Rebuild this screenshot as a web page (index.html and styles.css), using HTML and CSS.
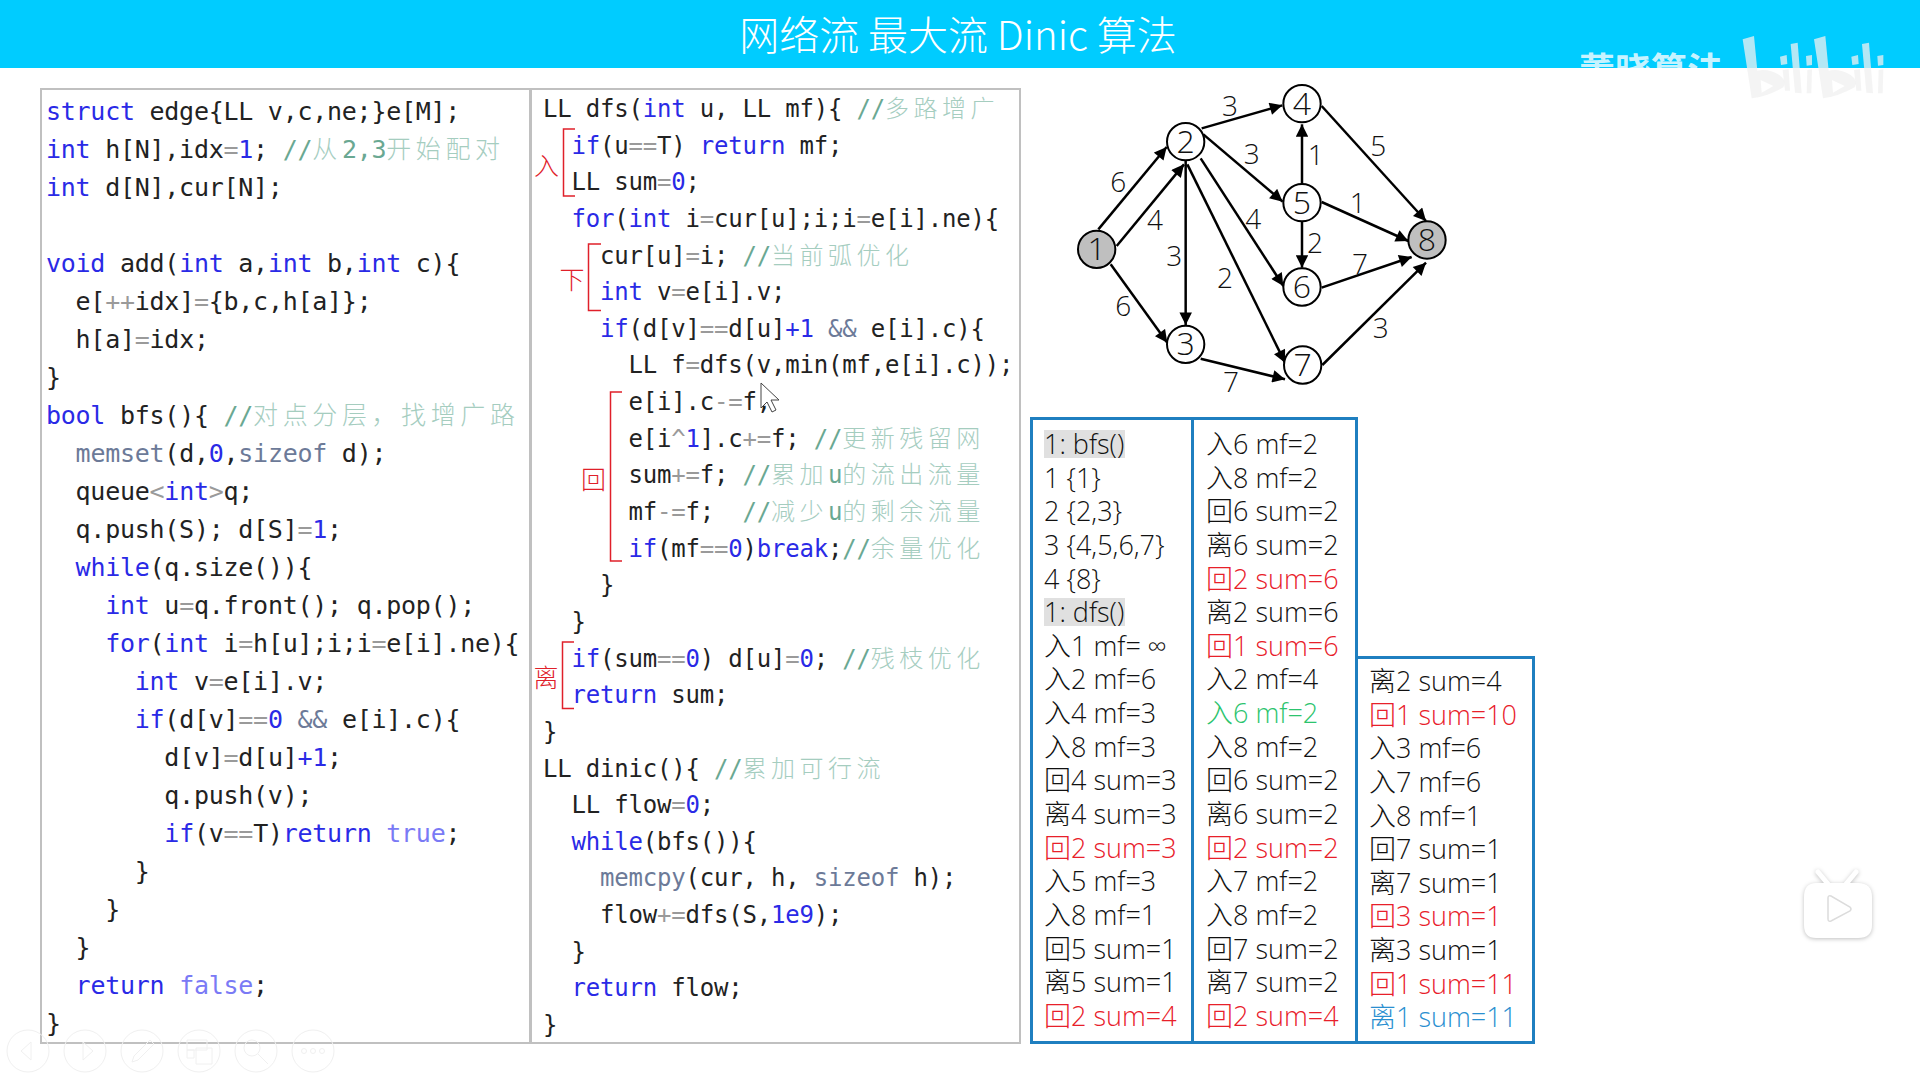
FILE: index.html
```html
<!DOCTYPE html>
<html lang="zh-CN">
<head>
<meta charset="utf-8">
<title>网络流 最大流 Dinic 算法</title>
<link rel="stylesheet" href="styles.css">
</head>
<body>
<header class="title">网络流 最大流 Dinic 算法</header>
<main class="stage">
  <section class="code code-left">
    <div class="ln"><b>struct</b> edge{LL v,c,ne;}e[M];</div>
    <div class="ln"><b>int</b> h[N],idx<s>=</s><b>1</b>; <u>//</u><em>从</em><u>2,3</u><em>开始配对</em></div>
    <div class="ln"><b>int</b> d[N],cur[N];</div>
    <div class="ln">&nbsp;</div>
    <div class="ln"><b>void</b> add(<b>int</b> a,<b>int</b> b,<b>int</b> c){</div>
    <div class="ln">  e[<s>++</s>idx]<s>=</s>{b,c,h[a]};</div>
    <div class="ln">  h[a]<s>=</s>idx;</div>
    <div class="ln">}</div>
    <div class="ln"><b>bool</b> bfs(){ <u>//</u><em>对点分层，找增广路</em></div>
    <div class="ln">  <i>memset</i>(d,<b>0</b>,<i>sizeof</i> d);</div>
    <div class="ln">  queue<s>&lt;</s><b>int</b><s>&gt;</s>q;</div>
    <div class="ln">  q.push(S); d[S]<s>=</s><b>1</b>;</div>
    <div class="ln">  <b>while</b>(q.size()){</div>
    <div class="ln">    <b>int</b> u<s>=</s>q.front(); q.pop();</div>
    <div class="ln">    <b>for</b>(<b>int</b> i<s>=</s>h[u];i;i<s>=</s>e[i].ne){</div>
    <div class="ln">      <b>int</b> v<s>=</s>e[i].v;</div>
    <div class="ln">      <b>if</b>(d[v]<s>==</s><b>0</b> <i>&amp;&amp;</i> e[i].c){</div>
    <div class="ln">        d[v]<s>=</s>d[u]<b>+1</b>;</div>
    <div class="ln">        q.push(v);</div>
    <div class="ln">        <b>if</b>(v<s>==</s>T)<b>return</b> <ins>true</ins>;</div>
    <div class="ln">      }</div>
    <div class="ln">    }</div>
    <div class="ln">  }</div>
    <div class="ln">  <b>return</b> <ins>false</ins>;</div>
    <div class="ln">}</div>
  </section>
  <section class="code code-mid">
    <div class="ln">LL dfs(<b>int</b> u, LL mf){ <u>//</u><em>多路增广</em></div>
    <div class="ln">  <b>if</b>(u<s>==</s>T) <b>return</b> mf;</div>
    <div class="ln">  LL sum<s>=</s><b>0</b>;</div>
    <div class="ln">  <b>for</b>(<b>int</b> i<s>=</s>cur[u];i;i<s>=</s>e[i].ne){</div>
    <div class="ln">    cur[u]<s>=</s>i; <u>//</u><em>当前弧优化</em></div>
    <div class="ln">    <b>int</b> v<s>=</s>e[i].v;</div>
    <div class="ln">    <b>if</b>(d[v]<s>==</s>d[u]<b>+1</b> <i>&amp;&amp;</i> e[i].c){</div>
    <div class="ln">      LL f<s>=</s>dfs(v,min(mf,e[i].c));</div>
    <div class="ln">      e[i].c<s>-=</s>f;</div>
    <div class="ln">      e[i<s>^</s><b>1</b>].c<s>+=</s>f; <u>//</u><em>更新残留网</em></div>
    <div class="ln">      sum<s>+=</s>f; <u>//</u><em>累加</em><u>u</u><em>的流出流量</em></div>
    <div class="ln">      mf<s>-=</s>f;  <u>//</u><em>减少</em><u>u</u><em>的剩余流量</em></div>
    <div class="ln">      <b>if</b>(mf<s>==</s><b>0</b>)<b>break</b>;<u>//</u><em>余量优化</em></div>
    <div class="ln">    }</div>
    <div class="ln">  }</div>
    <div class="ln">  <b>if</b>(sum<s>==</s><b>0</b>) d[u]<s>=</s><b>0</b>; <u>//</u><em>残枝优化</em></div>
    <div class="ln">  <b>return</b> sum;</div>
    <div class="ln">}</div>
    <div class="ln">LL dinic(){ <u>//</u><em>累加可行流</em></div>
    <div class="ln">  LL flow<s>=</s><b>0</b>;</div>
    <div class="ln">  <b>while</b>(bfs()){</div>
    <div class="ln">    <i>memcpy</i>(cur, h, <i>sizeof</i> h);</div>
    <div class="ln">    flow<s>+=</s>dfs(S,<b>1e9</b>);</div>
    <div class="ln">  }</div>
    <div class="ln">  <b>return</b> flow;</div>
    <div class="ln">}</div>
    <svg class="marks" viewBox="530 88 492 958">
      <g class="bracket">
        <path d="M575 129H563.5V196H575"/>
        <path d="M601 244H588.5V310.500H601"/>
        <path d="M622 392H610.500V561H622"/>
        <path d="M574 642H562.500V708.500H574"/>
      </g>
      <g class="mark">
        <text x="546.500" y="175">入</text>
        <text x="572" y="289">下</text>
        <text x="593.500" y="489">回</text>
        <text x="546" y="687">离</text>
      </g>
      <path class="cursor" d="M761 383V408L767 402L772 412L776 410L771 400L779 400Z"/>
    </svg>
  </section>
  <section class="side">
    <svg class="graph" viewBox="0 0 1320 1020">
      <defs>
        <marker id="tip" viewBox="0 0 10 10" refX="10" refY="5" markerWidth="5.500" markerHeight="5" orient="auto">
          <path d="M0 0L10 5L0 10Z"/>
        </marker>
      </defs>
      <g class="edges">
        <line x1="175" y1="475" x2="380" y2="228"/>
        <line x1="230" y1="525" x2="432" y2="280"/>
        <line x1="212" y1="580" x2="382" y2="815"/>
        <line x1="437" y1="270" x2="437" y2="762"/>
        <line x1="485" y1="172" x2="727" y2="103"/>
        <line x1="490" y1="190" x2="728" y2="392"/>
        <line x1="482" y1="262" x2="730" y2="645"/>
        <line x1="442" y1="280" x2="735" y2="875"/>
        <line x1="482" y1="863" x2="735" y2="925"/>
        <line x1="845" y1="105" x2="1158" y2="450"/>
        <line x1="786" y1="338" x2="786" y2="160"/>
        <line x1="786" y1="452" x2="786" y2="590"/>
        <line x1="845" y1="393" x2="1105" y2="510"/>
        <line x1="845" y1="650" x2="1115" y2="558"/>
        <line x1="847" y1="882" x2="1158" y2="575"/>
      </g>
      <g class="nodes">
        <circle class="dark" cx="170" cy="535" r="56"/>
        <circle cx="437" cy="212" r="56"/>
        <circle cx="437" cy="820" r="56"/>
        <circle cx="786" cy="98" r="56"/>
        <circle cx="786" cy="395" r="56"/>
        <circle cx="786" cy="648" r="56"/>
        <circle cx="788" cy="882" r="56"/>
        <circle class="dark" cx="1161" cy="507" r="56"/>
      </g>
      <g class="node-labels">
        <text x="170" y="567">1</text>
        <text x="437" y="245">2</text>
        <text x="437" y="852">3</text>
        <text x="786" y="131">4</text>
        <text x="786" y="428">5</text>
        <text x="786" y="680">6</text>
        <text x="788" y="915">7</text>
        <text x="1161" y="540">8</text>
      </g>
      <g class="edge-labels">
        <text x="235" y="362">6</text>
        <text x="345" y="477">4</text>
        <text x="403" y="585">3</text>
        <text x="250" y="735">6</text>
        <text x="570" y="135">3</text>
        <text x="635" y="280">3</text>
        <text x="640" y="475">4</text>
        <text x="555" y="650">2</text>
        <text x="573" y="962">7</text>
        <text x="827" y="282">1</text>
        <text x="1015" y="255">5</text>
        <text x="953" y="427">1</text>
        <text x="825" y="545">2</text>
        <text x="960" y="608">7</text>
        <text x="1022" y="800">3</text>
      </g>
    </svg>
    <div class="lists">
      <div class="list">
        <div class="row hl"><span>1: bfs()</span></div>
        <div class="row">1 {1}</div>
        <div class="row">2 {2,3}</div>
        <div class="row">3 {4,5,6,7}</div>
        <div class="row">4 {8}</div>
        <div class="row hl"><span>1: dfs()</span></div>
        <div class="row">入1 mf= ∞</div>
        <div class="row">入2 mf=6</div>
        <div class="row">入4 mf=3</div>
        <div class="row">入8 mf=3</div>
        <div class="row">回4 sum=3</div>
        <div class="row">离4 sum=3</div>
        <div class="row red">回2 sum=3</div>
        <div class="row">入5 mf=3</div>
        <div class="row">入8 mf=1</div>
        <div class="row">回5 sum=1</div>
        <div class="row">离5 sum=1</div>
        <div class="row red">回2 sum=4</div>
      </div>
      <div class="list list-mid">
        <div class="row">入6 mf=2</div>
        <div class="row">入8 mf=2</div>
        <div class="row">回6 sum=2</div>
        <div class="row">离6 sum=2</div>
        <div class="row red">回2 sum=6</div>
        <div class="row">离2 sum=6</div>
        <div class="row red">回1 sum=6</div>
        <div class="row">入2 mf=4</div>
        <div class="row green">入6 mf=2</div>
        <div class="row">入8 mf=2</div>
        <div class="row">回6 sum=2</div>
        <div class="row">离6 sum=2</div>
        <div class="row red">回2 sum=2</div>
        <div class="row">入7 mf=2</div>
        <div class="row">入8 mf=2</div>
        <div class="row">回7 sum=2</div>
        <div class="row">离7 sum=2</div>
        <div class="row red">回2 sum=4</div>
      </div>
      <div class="list list-short">
        <div class="row">离2 sum=4</div>
        <div class="row red">回1 sum=10</div>
        <div class="row">入3 mf=6</div>
        <div class="row">入7 mf=6</div>
        <div class="row">入8 mf=1</div>
        <div class="row">回7 sum=1</div>
        <div class="row">离7 sum=1</div>
        <div class="row red">回3 sum=1</div>
        <div class="row">离3 sum=1</div>
        <div class="row red">回1 sum=11</div>
        <div class="row blue">离1 sum=11</div>
      </div>
    </div>
  </section>
</main>
<div class="wm-text">董晓算法</div>
<svg class="wm-logo" viewBox="0 0 1260 360">
  <defs>
    <g id="bili">
      <path fill-rule="evenodd" d="M728 118L762 108L772 212Q805 205 838 225Q862 242 850 262Q800 290 755 295ZM782 240L785 278L820 258Z"/>
      <path d="M840 170L860 165L862 192L843 195ZM848 210L866 208L870 272L855 272Z"/>
      <path d="M872 132L893 128L905 280L885 278Z"/>
      <path d="M918 168L936 165L936 195L920 197ZM922 210L936 208L934 280L920 280Z"/>
    </g>
  </defs>
  <use href="#bili"/>
  <use href="#bili" x="214"/>
</svg>
<svg class="player-bar" viewBox="0 0 340 60">
  <g class="pb">
    <circle cx="28" cy="31" r="21"/><circle cx="85" cy="31" r="21"/><circle cx="142" cy="31" r="21"/>
    <circle cx="199" cy="31" r="21"/><circle cx="256" cy="31" r="21"/><circle cx="313" cy="31" r="21"/>
    <path d="M31 22L21 31L31 40Z"/>
    <path d="M83 22L93 31L83 40Z"/>
    <path d="M132 42L134 36L150 20L154 24L138 40Z"/>
    <path d="M187 20H207V30H187ZM187 30H194V38H187ZM196 28H212V44H196Z"/>
    <circle cx="252" cy="28" r="8"/><path d="M258 34L268 44"/>
    <circle cx="304" cy="31" r="2.500"/><circle cx="313" cy="31" r="2.500"/><circle cx="322" cy="31" r="2.500"/>
  </g>
</svg>
<svg class="tv" viewBox="0 0 80 76">
  <path class="tv-ant" d="M20 3L30 15M58 3L48 15"/>
  <path class="tv-body" d="M18 14H60Q74 14 74 28V56Q74 69 60 69H18Q6 69 6 56V28Q6 14 18 14Z"/>
  <path class="tv-play" d="M30 29Q30 26 33 27L52 38Q54 40 52 42L33 52Q30 53 30 50Z"/>
</svg>
</body>
</html>
```
FILE: styles.css
```css
* { box-sizing: border-box; }
html, body { margin: 0; padding: 0; }
body {
  position: relative;
  width: 1920px;
  height: 1080px;
  overflow: hidden;
  background: #fff;
  font-family: "Noto Sans CJK SC", sans-serif;
}
.title {
  height: 68px;
  background: #00ccff;
  color: #fff;
  font-family: "Noto Sans CJK SC", sans-serif;
  font-weight: 300;
  font-size: 40px;
  line-height: 66px;
  text-align: center;
  padding-right: 4px;
}
.stage {
  display: flex;
  align-items: flex-start;
  padding: 20px 0 0 40px;
}
.code {
  position: relative;
  height: 956px;
  border: 2px solid #c0c0c0;
  font-family: "DejaVu Sans Mono", monospace;
  color: #222;
  flex: none;
}
.code-left {
  width: 491px;
  padding: 3px 0 0 4px;
  font-size: 25px;
  letter-spacing: -0.26px;
  line-height: 38px;
}
.code-mid {
  width: 491px;
  margin-left: -1px;
  padding: 1px 0 0 11px;
  font-size: 24px;
  letter-spacing: -0.2px;
  line-height: 36.65px;
}
.ln { height: 1lh; white-space: pre; }
.code b { font-weight: 400; color: #2a2ae6; }
.code s { text-decoration: none; color: #9a9a9a; }
.code i { font-style: normal; color: #6c7a98; }
.code ins { text-decoration: none; color: #7a7af5; }
.code u { text-decoration: none; color: #6aa892; }
.code em {
  font-style: normal;
  font-family: "Noto Sans CJK SC", sans-serif;
  font-weight: 300;
  line-height: 0;
  color: #a5cdbf;
  font-size: 25px;
  letter-spacing: 4.6px;
}
.code-mid em { font-size: 24px; letter-spacing: 4.5px; }
.marks {
  position: absolute;
  left: -2px;
  top: -2px;
  width: 492px;
  height: 958px;
}
.bracket path { fill: none; stroke: #e0202a; stroke-width: 1.5; }
.mark text {
  fill: #e0202a;
  font-size: 25px;
  font-weight: 300;
  text-anchor: middle;
  font-family: "Noto Sans CJK SC", sans-serif;
}
.cursor { fill: #fff; stroke: #444; stroke-width: 1; }
.side {
  flex: none;
  width: 520px;
  display: flex;
  flex-direction: column;
  margin-top: -20px;
  margin-left: -1px;
}
.graph {
  display: block;
  width: 440px;
  height: 340px;
  margin: 3px 0 0 20px;
}
.graph marker path { fill: #000; }
.edges line { stroke: #000; stroke-width: 7.500; marker-end: url(#tip); }
.nodes circle { fill: #fff; stroke: #000; stroke-width: 6; }
.nodes .dark { fill: #bfbfbf; }
.node-labels text, .edge-labels text {
  fill: #111;
  text-anchor: middle;
  font-family: "Open Sans", sans-serif;
  font-weight: 300;
}
.node-labels text { font-size: 96px; }
.edge-labels text { font-size: 84px; }
.lists {
  display: flex;
  align-items: flex-end;
  margin: 6px 0 0 10px;
  height: 627px;
}
.list {
  width: 164px;
  height: 627px;
  border: 3px solid #1f7fc0;
  padding: 7px 0 0 11px;
  margin-right: -3px;
  font-family: "Open Sans", "Noto Sans CJK SC", sans-serif;
  font-weight: 300;
  font-size: 27px;
  color: #111;
}
.list-mid {
  width: 167px;
  padding-left: 12px;
}
.list-short {
  width: 180px;
  height: 388px;
  padding: 5px 0 0 11px;
  margin-right: 0;
}
.row { height: 33.650px; line-height: 33.650px; white-space: pre; }
.hl span { display: inline-block; background: #e0e0e0; width: 81px; height: 28px; line-height: 28px; }
.red { color: #e8202a; }
.green { color: #2cc46e; }
.blue { color: #2a8fd0; }
.wm-text {
  position: absolute;
  left: 1579px;
  top: 46px;
  font-size: 36px;
  line-height: 44px;
  font-weight: 700;
  color: rgba(255, 255, 255, 0.8);
  white-space: nowrap;
}
.wm-logo {
  position: absolute;
  left: 1500px;
  top: 0;
  width: 420px;
  height: 120px;
  fill: rgba(240, 240, 240, 0.75);
}
.player-bar {
  position: absolute;
  left: 0;
  top: 1020px;
  width: 340px;
  height: 60px;
}
.pb circle, .pb path { fill: none; stroke: #f0f0f0; stroke-width: 1; }
.tv {
  position: absolute;
  left: 1798px;
  top: 869px;
  width: 80px;
  height: 76px;
  filter: drop-shadow(0 1px 2px rgba(0, 0, 0, 0.25));
}
.tv-ant { fill: none; stroke: #fff; stroke-width: 5; stroke-linecap: round; }
.tv-body { fill: #fff; }
.tv-play { fill: #fff; stroke: #dcdcdc; stroke-width: 1.500; }
```
